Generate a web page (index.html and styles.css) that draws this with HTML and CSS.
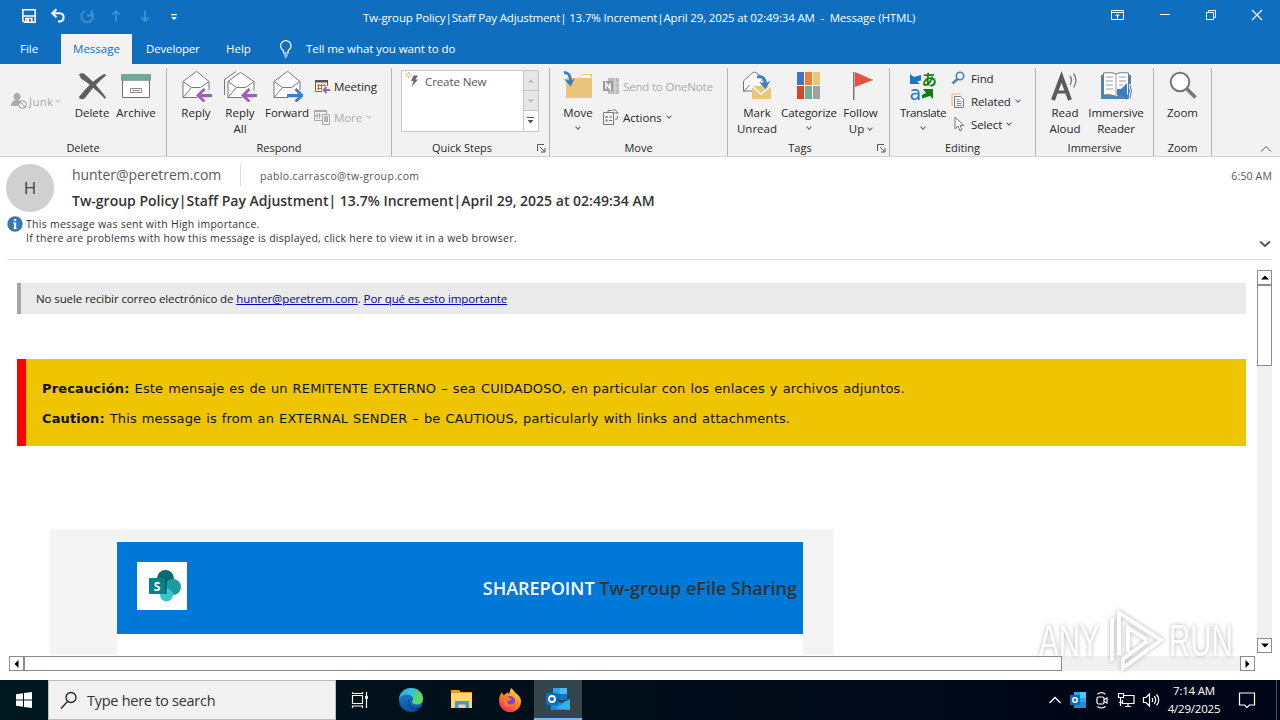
FILE: index.html
```html
<!DOCTYPE html>
<html lang="en">
<head>
    <meta charset="UTF-8">
    <meta name="viewport" content="width=device-width, initial-scale=1.0">
    <title>Message (HTML)</title>
    <link rel="stylesheet" href="styles.css">
</head>
<body>

    <header class="titlebar">
        <div class="quick-access">
            <svg width="16" height="16" viewBox="0 0 16 16" fill="none" stroke="#fff" stroke-width="1.6"><path d="M1.8 1.8h12.4v12.4H3.4L1.8 12.6z"/><path d="M2 8h12M4.8 14v-3.5h6V14" /><path d="M7 11v3" stroke-width="2"/></svg>
            <svg width="16" height="16" viewBox="0 0 16 16" fill="none" stroke="#fff" stroke-width="2"><path d="M6.5 1.2 2.2 5.2l4.3 4M2.5 5.2h7.2c5.3 0 5.3 8.3-.5 8.3H8"/></svg>
            <svg width="16" height="16" viewBox="0 0 16 16" fill="none" stroke="#3f8fd2" stroke-width="1.8"><path d="M5.500 2.800a6 6 0 1 0 6 .3M8 7.500h4.500V2"/></svg>
            <svg width="16" height="16" viewBox="0 0 16 16" fill="none" stroke="#3f8fd2" stroke-width="1.8"><path d="M8 14V3M4.3 6.7 8 3l3.7 3.7"/></svg>
            <svg width="16" height="16" viewBox="0 0 16 16" fill="none" stroke="#3f8fd2" stroke-width="1.8"><path d="M8 2v11M4.3 9.3 8 13l3.7-3.7"/></svg>
            <svg width="16" height="16" viewBox="0 0 16 16" fill="#fff"><path d="M5 6h6v1.200H5zM5 9h6l-3 3z"/></svg>
        </div>
        <div class="title">Tw-group Policy|Staff Pay Adjustment| 13.7% Increment|April 29, 2025 at 02:49:34 AM&nbsp; -&nbsp; Message (HTML)</div>
        <div class="window-buttons">
            <svg width="14" height="12" viewBox="0 0 14 12" fill="none" stroke="#fff"><path d="M.5 1.5h12v9H.5zM.5 3.5h12M6.5 10V5M4.5 7l2-2 2 2"/></svg>
            <svg width="12" height="12" viewBox="0 0 12 12" fill="none" stroke="#fff"><path d="M1 5.5h10"/></svg>
            <svg width="12" height="12" viewBox="0 0 12 12" fill="none" stroke="#fff"><path d="M1.5 3.5h7v7h-7zM3.500 3.500v-2h7v7h-2"/></svg>
            <svg width="12" height="12" viewBox="0 0 12 12" fill="none" stroke="#fff" stroke-width="1.2"><path d="m1 1 10 10M11 1 1 11"/></svg>
        </div>
    </header>

    <nav class="tabs">
        <span class="tab tab-file">File</span>
        <span class="tab tab-active">Message</span>
        <span class="tab tab-dev">Developer</span>
        <span class="tab tab-help">Help</span>
        <svg class="bulb" width="14" height="18" viewBox="0 0 14 18" fill="none" stroke="#fff" stroke-width="1.2"><path d="M4.500 13v-2.200C3 9.500 1.500 8.200 1.500 6a5.300 5.300 0 0 1 10.600 0c0 2.200-1.500 3.500-3 4.800V13zM4.800 15h4M5.500 17h2.600"/></svg>
        <span class="tell-me">Tell me what you want to do</span>
    </nav>

    <section class="ribbon">
        <div class="group g-delete">
            <div class="tools">
                <div class="row-btn junk disabled">
                    <svg width="16" height="18" viewBox="0 0 16 18"><circle cx="6" cy="4.500" r="3.500" fill="#aaa"/><path d="M0 14c0-5 3-6 6-6 2 0 3 .5 4 1.500L7 14z" fill="#aaa"/><circle cx="11.500" cy="12.500" r="3.800" fill="#f3f3f3" stroke="#999"/><path d="m9 10 5 5" stroke="#999"/></svg>
                    <span>Junk</span><i class="caret"></i>
                </div>
                <div class="big-btn w-delete">
                    <svg width="32" height="32" viewBox="0 0 32 32" fill="#5f5f5f"><path d="M3 4.500C5 2.500 8 3 9 4.500c6 5 14 13 21 23l-1 1.500C22 22 14 14 5 8.500z"/><path d="M28 4l2.500 1C23 11 15 20 9 28c-2 2-6 1.500-6-1C10 18 19 9 28 4z"/></svg>
                    <span>Delete</span>
                </div>
                <div class="big-btn w-archive">
                    <svg width="32" height="32" viewBox="0 0 32 32"><path d="M2.500 10h27v17.500h-27z" fill="#fff" stroke="#6e6e6e"/><path d="M1 4h30v6.500H1z" fill="#73a796"/><path d="M10.500 18.500h11v4h-11zM12.500 20.500h7" fill="none" stroke="#888"/></svg>
                    <span>Archive</span>
                </div>
            </div>
            <div class="group-label">Delete</div>
        </div>

        <div class="group g-respond">
            <div class="tools">
                <div class="big-btn w-reply">
                    <svg width="32" height="32" viewBox="0 0 32 32"><path d="M3 11.500 15.500 2q1-.6 2 0L29 11.500V27.500H3z" fill="#fff" stroke="#777"/><path d="m3 11.500 8.500 6h9l8.500-6" fill="none" stroke="#777"/><path d="m3 27.500 8.500-10" fill="none" stroke="#777"/><path d="M17 20h15v12H17z" fill="#f3f3f3" opacity=".7"/><path d="M32 25.500H18.500M24.500 19l-6.500 6.500 6.500 6" fill="none" stroke="#9b5fb9" stroke-width="2.800"/></svg>
                    <span>Reply</span>
                </div>
                <div class="big-btn w-replyall">
                    <svg width="34" height="32" viewBox="0 0 34 32"><path d="M1.500 25V9.500L13 1.500" fill="none" stroke="#777"/><path d="M5 11.500 16.500 3q1-.6 2 0L31 11.500V27.500H5z" fill="#fff" stroke="#777"/><path d="m5 11.500 8.500 6h9l8.500-6M5 27.500l8.500-10" fill="none" stroke="#777"/><path d="M19 20h15v12H19z" fill="#f3f3f3" opacity=".7"/><path d="M34 25.500H20.500M26.500 19 20 25.500l6.500 6" fill="none" stroke="#9b5fb9" stroke-width="2.800"/></svg>
                    <span>Reply<br>All</span>
                </div>
                <div class="big-btn w-forward">
                    <svg width="32" height="32" viewBox="0 0 32 32"><path d="M3 11.500 15.500 2q1-.6 2 0L29 11.500V27.500H3z" fill="#fff" stroke="#777"/><path d="m3 11.500 8.500 6h9l8.500-6M3 27.500l8.500-10" fill="none" stroke="#777"/><path d="M17 20h15v12H17z" fill="#f3f3f3" opacity=".7"/><path d="M16 25.500h14M24.500 19l6.500 6.500-6.500 6" fill="none" stroke="#3c7fc0" stroke-width="2.800"/></svg>
                    <span>Forward</span>
                </div>
                <div class="col two">
                    <div class="row-btn">
                        <svg width="16" height="16" viewBox="0 0 16 16"><path d="M1.500 2.500h12v11h-12z" fill="#fff" stroke="#a3542b"/><path d="M1 2h13v2.500H1z" fill="#555"/><path d="M4.500 6v6M7.500 6v6M10.500 6v4M3 7.500h9M3 10.500h7" stroke="#c46b3b"/><path d="M8 8h8v8H8z" fill="#f3f3f3"/><path d="M16 12H10M12.500 9l-3 3 3 3" fill="none" stroke="#9b5fb9" stroke-width="1.800"/></svg>
                        <span>Meeting</span>
                    </div>
                    <div class="row-btn disabled">
                        <svg width="16" height="16" viewBox="0 0 16 16" fill="none" stroke="#aaa"><path d="M.5 1.500h12v10H.5zM1 2.500h11M3 4v6M5.500 4v6M1 6.500h6"/><path d="M8.500 5.500h7v10h-7z" fill="#f3f3f3"/><path d="M10.500 7.500h3v5h-3z" fill="#bbb"/></svg>
                        <span>More</span><i class="caret"></i>
                    </div>
                </div>
            </div>
            <div class="group-label">Respond</div>
        </div>

        <div class="group g-quick">
            <div class="gallery">
                <div class="gallery-item">
                    <svg width="18" height="18" viewBox="0 0 18 18"><path d="M8.500 4.500h4.500l-2.500 4h2.500L6.500 16l2-6H6z" fill="#6b6b6b"/><path d="M3.500 1v6M.5 4h6M1.500 2l4 4M5.500 2l-4 4" stroke="#e8a850" stroke-width=".9"/><circle cx="3.500" cy="4" r="1.200" fill="#fff"/></svg>
                    <span>Create New</span>
                </div>
                <div class="gallery-scroll">
                    <b><svg width="6" height="4" viewBox="0 0 6 4"><path d="M0 3.500h6L3 .5z" fill="#b5b5b5"/></svg></b>
                    <b><svg width="6" height="4" viewBox="0 0 6 4"><path d="M0 .5h6l-3 3z" fill="#b5b5b5"/></svg></b>
                    <b class="on"><svg width="8" height="8" viewBox="0 0 8 8" fill="#555"><path d="M0 0h7v1H0zM.5 3h6l-3 3.500z"/></svg></b>
                </div>
            </div>
            <div class="group-label">Quick Steps</div>
            <svg class="launcher" width="9" height="9" viewBox="0 0 9 9" fill="none" stroke="#555"><path d="M.5 7V.5H7M3 3l4.500 4.500M8 4v4H4"/></svg>
        </div>

        <div class="group g-move">
            <div class="tools">
                <div class="big-btn w-move">
                    <svg width="32" height="32" viewBox="0 0 32 32"><path d="M4 8h12l4-4h10v24H4z" fill="#ebc57c"/><path d="M20 5h8l1.500 3H17z" fill="#fff"/><path d="M2 2.500c5 0 6.500 3 6.500 9" fill="none" stroke="#3c7fc0" stroke-width="3"/><path d="m2 9 6.500 7.500L13 8l-4.500 3z" fill="#3c7fc0"/></svg>
                    <span>Move</span><i class="caret"></i>
                </div>
                <div class="col two">
                    <div class="row-btn disabled">
                        <svg width="16" height="16" viewBox="0 0 16 16"><path d="M5 0h11v16H5z" fill="#bbb"/><path d="M12 0v16M12 5h4M12 10h4" stroke="#ddd"/><path d="M0 3h10v10H0z" fill="#9b9b9b"/><path d="M3 11V5l4 6V5" fill="none" stroke="#fff" stroke-width="1.400"/></svg>
                        <span class="onenote">Send to OneNote</span>
                    </div>
                    <div class="row-btn">
                        <svg width="16" height="16" viewBox="0 0 16 16" fill="none" stroke="#777"><path d="M.5 3.500h10v12H.5zM6 8h3M6 11.500h3"/><path d="M2.500 8h2M2.500 11.500h2" stroke-width="2"/><path d="M5 3V1.500h3M9 1.500c4-2 5 1 4.500 3M11.500 3l2 2 2-2M12 10h2.500V7"/></svg>
                        <span>Actions</span><i class="caret"></i>
                    </div>
                </div>
            </div>
            <div class="group-label">Move</div>
        </div>

        <div class="group g-tags">
            <div class="tools">
                <div class="big-btn w-unread">
                    <svg width="32" height="32" viewBox="0 0 32 32"><path d="M2.500 11 12 2.500q1.500-.8 3 0L22 8v13H2.500z" fill="#fff" stroke="#777"/><path d="m2.500 22 6-7" stroke="#777"/><path d="M11 16h19v13H11z" fill="#ebc57c"/><path d="m11 16 9 8 10-8" fill="none" stroke="#fff" stroke-width="1.500"/><path d="M16 7c6-1 8.500 2 8.500 7" fill="none" stroke="#3c7fc0" stroke-width="3"/><path d="m18 12 6.500 7 5-8.500-5 3z" fill="#3c7fc0"/></svg>
                    <span>Mark<br>Unread</span>
                </div>
                <div class="big-btn w-categorize">
                    <svg width="32" height="32" viewBox="0 0 32 32"><path d="M4 2h7v13H4z" fill="#4472c4"/><path d="M12 2h7v13h-7z" fill="#ed8236"/><path d="M20 2h7v13h-7z" fill="#ebc57c"/><path d="M4 16h7v13H4z" fill="#d24726"/><path d="M12 16h7v13h-7z" fill="#6fae9a"/><path d="M20 16h7v13h-7z" fill="#a0a0a0"/></svg>
                    <span>Categorize</span><i class="caret"></i>
                </div>
                <div class="big-btn w-follow">
                    <svg width="32" height="32" viewBox="0 0 32 32"><path d="M8 2h1.500v28H8z" fill="#777"/><path d="m10 2 18 8-18 7z" fill="#e8503a"/></svg>
                    <span>Follow<br>Up <i class="caret"></i></span>
                </div>
            </div>
            <div class="group-label">Tags</div>
            <svg class="launcher" width="9" height="9" viewBox="0 0 9 9" fill="none" stroke="#555"><path d="M.5 7V.5H7M3 3l4.500 4.500M8 4v4H4"/></svg>
        </div>

        <div class="group g-editing">
            <div class="tools">
                <div class="big-btn w-translate">
                    <div class="glyphs">
                        <svg width="12" height="13" viewBox="0 0 12 13"><path d="M1 2v10h10L8 9.500l4-1V3L5 5z" fill="#1479c9"/></svg>
                        <span class="kana">あ</span>
                        <span class="latin">a</span>
                        <svg width="13" height="13" viewBox="0 0 13 13"><path d="M2 2h10v10L9 9l-8 2.500V8l4-2z" fill="#107c10"/></svg>
                    </div>
                    <span>Translate</span><i class="caret"></i>
                </div>
                <div class="col three">
                    <div class="row-btn">
                        <svg width="16" height="16" viewBox="0 0 16 16" fill="none" stroke="#4a7fb8"><circle cx="9" cy="6" r="3.700" stroke-width="1.600"/><path d="m6.500 9-5 4.500" stroke-width="2.400"/></svg>
                        <span>Find</span>
                    </div>
                    <div class="row-btn">
                        <svg width="16" height="16" viewBox="0 0 16 16" fill="none"><path d="M1 13V1h9" stroke="#e8b088"/><path d="M3.500 3.500h6l3 3v8h-9z" fill="#fff" stroke="#777"/><path d="M5.500 6.500h3M5.500 8.500h5M5.500 10.500h5M5.500 12.500h5" stroke="#888"/></svg>
                        <span>Related</span><i class="caret"></i>
                    </div>
                    <div class="row-btn">
                        <svg width="16" height="16" viewBox="0 0 16 16" fill="#fff" stroke="#777"><path d="M4 1v12l3-3 2 5 2-1-2-4.500h4z"/></svg>
                        <span>Select</span><i class="caret"></i>
                    </div>
                </div>
            </div>
            <div class="group-label">Editing</div>
        </div>

        <div class="group g-immersive">
            <div class="tools">
                <div class="big-btn w-read">
                    <svg width="32" height="32" viewBox="0 0 32 32" fill="none" stroke="#5b5b5b"><path d="M4 30 12.500 7 21 30" stroke-width="4"/><path d="M8 22h10" stroke-width="3"/><path d="M21 6q3 4 0 9M24.500 3.500q5 6.500 0 14" stroke="#777" stroke-width="1.300"/></svg>
                    <span>Read<br>Aloud</span>
                </div>
                <div class="big-btn w-reader">
                    <svg width="32" height="32" viewBox="0 0 32 32"><path d="M1 5h30v24H1z" fill="#4a86b8"/><path d="M3.500 3q9-1 12.500 1Q19 2 28.500 3v22Q19 24 16 27q-3-3-12.500-2z" fill="#fff" stroke="#777"/><path d="M16 4v22M6 7h7M6 11h7M6 15h7M6 19h7M19 7h7M19 11h7M19 15h4" stroke="#999"/><path d="M29 14h3v16h-3z" fill="#f2f2f2"/><path d="M17 19h4l6-6v17l-6-5h-4z" fill="#3c7fc0"/><path d="M28.500 18q2 3 0 7M30 15q3 6 0 13" fill="none" stroke="#3c7fc0"/></svg>
                    <span>Immersive<br>Reader</span>
                </div>
            </div>
            <div class="group-label">Immersive</div>
        </div>

        <div class="group g-zoom">
            <div class="tools">
                <div class="big-btn w-zoom">
                    <svg width="32" height="32" viewBox="0 0 32 32"><circle cx="13" cy="12" r="9.300" fill="#fff" stroke="#777" stroke-width="2"/><path d="m20 19 8.500 8.500" stroke="#777" stroke-width="3.600"/></svg>
                    <span>Zoom</span>
                </div>
            </div>
            <div class="group-label">Zoom</div>
        </div>
        <svg class="collapse" width="12" height="8" viewBox="0 0 12 8" fill="none" stroke="#555"><path d="m1 6.500 5-5 5 5"/></svg>
    </section>

    <section class="mail-header">
        <div class="avatar">H</div>
        <div class="mail-meta">
            <div class="people">
                <span class="from">hunter@peretrem.com</span>
                <span class="to">pablo.carrasco@tw-group.com</span>
                <span class="time">6:50 AM</span>
            </div>
            <h1 class="subject">Tw-group Policy|Staff Pay Adjustment| 13.7% Increment|April 29, 2025 at 02:49:34 AM</h1>
        </div>
    </section>
    <section class="infobar">
        <svg width="16" height="16" viewBox="0 0 16 16"><circle cx="8" cy="8" r="7.700" fill="#3a78b5"/><path d="M7 3h2.200v2H7zM6 6.500h3.200V12H10v1H6v-1h1V7.500H6z" fill="#fff"/></svg>
        <div class="info-text">
            <p class="info-high">This message was sent with High importance.</p>
            <p class="info-view">If there are problems with how this message is displayed, click here to view it in a web browser.</p>
        </div>
        <svg class="expand" width="12" height="8" viewBox="0 0 12 8" fill="none" stroke="#555" stroke-width="1.800"><path d="m1 1.500 5 4.500 5-4.500"/></svg>
    </section>

    <main class="reader">
        <div class="body-row">
            <div class="mail-body">
                <div class="tip">No suele recibir correo electrónico de <a>hunter@peretrem.com</a>. <a>Por qué es esto importante</a></div>
                <div class="caution">
                    <p class="es"><b>Precaución:</b> Este mensaje es de un REMITENTE EXTERNO – sea CUIDADOSO, en particular con los enlaces y archivos adjuntos.</p>
                    <p class="en"><b>Caution:</b> This message is from an EXTERNAL SENDER – be CAUTIOUS, particularly with links and attachments.</p>
                </div>
                <div class="letter">
                    <div class="letter-page">
                        <div class="letter-head">
                            <div class="logo">
                                <svg width="34" height="34" viewBox="0 0 34 34"><circle cx="17.500" cy="9.500" r="8.500" fill="#036c70"/><circle cx="25" cy="18" r="8" fill="#1a9ba1"/><circle cx="18.500" cy="26" r="6.500" fill="#37c6d0"/><path d="M10 9h8.500v16H12z" fill="#03545a"/><rect x="1" y="9" width="16" height="16" rx="1" fill="#038387"/><text x="9" y="22" text-anchor="middle" class="logo-s">S</text></svg>
                            </div>
                            <div class="letter-title"><span>SHAREPOINT</span> Tw-group eFile Sharing</div>
                        </div>
                    </div>
                </div>
            </div>
            <div class="vscroll">
                <b><svg width="8" height="5" viewBox="0 0 8 5"><path d="M0 4.500h8l-4-4z"/></svg></b>
                <i></i>
                <b class="end"><svg width="8" height="5" viewBox="0 0 8 5"><path d="M0 .5h8l-4 4z"/></svg></b>
            </div>
        </div>
        <div class="hscroll">
            <b><svg width="5" height="8" viewBox="0 0 5 8"><path d="M4.500 0v8l-4-4z"/></svg></b>
            <i></i>
            <b class="end"><svg width="5" height="8" viewBox="0 0 5 8"><path d="M.5 0v8l4-4z"/></svg></b>
        </div>
    </main>

    <div class="watermark">
        <span>ANY</span>
        <svg width="56" height="64" viewBox="0 0 56 64" fill="none" stroke="#fff" stroke-width="4"><path d="M11 46V4l42 27-38 28v-9l24-18"/><path d="M4 52V9M20 43V19l19 12"/></svg>
        <span>RUN</span>
    </div>

    <footer class="taskbar">
        <div class="start"><svg width="18" height="18" viewBox="0 0 18 18" fill="#fff"><path d="M1 3.200 8 2.200v6.300H1zM9 2 17 1v7.500H9zM1 9.500h7v6.300l-7-1zM9 9.500h8V17l-8-1z"/></svg></div>
        <div class="search">
            <svg width="18" height="18" viewBox="0 0 18 18" fill="none" stroke="#222" stroke-width="1.300"><circle cx="11" cy="6.500" r="5"/><path d="m7.500 10.500-6.500 7"/></svg>
            <span>Type here to search</span>
        </div>
        <div class="task"><svg width="18" height="18" viewBox="0 0 18 18" fill="none" stroke="#fff" stroke-width="1.200"><path d="M1.500 4.500h10v8h-10zM1.500 1v1.500h10V1M1.500 17v-2h10v2M15.500 1v16"/><path d="M14.200 5h2.600v3h-2.600z" fill="#fff" stroke="none"/></svg></div>
        <div class="task task-edge"><svg width="26" height="26" viewBox="0 0 26 26"><defs><linearGradient id="e1" x1="0" y1="0" x2="1" y2=".4"><stop offset="0" stop-color="#2aa7e0"/><stop offset=".5" stop-color="#35c1d0"/><stop offset="1" stop-color="#65d958"/></linearGradient><linearGradient id="e2" x1="0" y1="0" x2="0" y2="1"><stop offset="0" stop-color="#1a8ad8"/><stop offset="1" stop-color="#0c4f9e"/></linearGradient></defs><circle cx="13" cy="13" r="12" fill="url(#e2)"/><path d="M1 12C2 5 7 1 13 1c7 0 12 5 12 10.500 0 4-3 6-6.500 6-2.500 0-4.500-1-4.500-2.200 0-1 1-1.300 1-3C15 9 12 7.500 9 7.500c-4 0-7 2-8 4.500z" fill="url(#e1)"/><path d="M15 12c-4 0-5.500 2-4 5.500 2 4 7 5 12 2 .5 0 .5.500.2 1-4 3-10 2-12.500-2-2.500-4 .3-7.500 4.300-6.500z" fill="#0b2f55"/></svg></div>
        <div class="task"><svg width="24" height="22" viewBox="0 0 24 22"><path d="M1 1h8l2 2h11v15H1z" fill="#e89c1e"/><path d="M1 4h21v15H1z" fill="#fcd86a"/><path d="M5 19v-7h14v7h-3.500v-3.500h-7V19z" fill="#3b9ae0"/></svg></div>
        <div class="task task-fox"><svg width="24" height="24" viewBox="0 0 24 24"><defs><linearGradient id="f1" x1=".8" y1="0" x2=".2" y2="1"><stop offset="0" stop-color="#ffe338"/><stop offset=".45" stop-color="#ff8a1c"/><stop offset="1" stop-color="#f0245e"/></linearGradient></defs><path d="M1 13c0-4 1-6 3-9l1 3 3-1 1-2 2 2 2-6c3 2 4 5 6 6l1 1c2 2 3 4 3 6.500A11 11 0 0 1 1 13z" fill="url(#f1)"/><circle cx="12" cy="13" r="5" fill="#7d42d8"/><path d="M5 8c3-1 5 0 6 2l3 1c-1 2-4 1-5 3 1 3 5 3 7 1 0 4-8 6-10 1z" fill="#ff7a20"/></svg></div>
        <div class="task task-active"><svg width="26" height="24" viewBox="0 0 26 24"><path d="M8 1h14v12H8z" fill="#28a8ea"/><path d="M15 1h7v6h-7z" fill="#50b9f0"/><path d="M8 7h7v6H8z" fill="#0364b8"/><path d="M15 7h7v6h-7z" fill="#0078d4"/><path d="M6 12l10 4 9-4v11H6z" fill="#1490df"/><path d="m25 12-14 9 14 2z" fill="#35b0ee"/><rect x="1" y="6" width="12" height="12" rx="1" fill="#0f6cbd"/><circle cx="7" cy="12" r="3" fill="none" stroke="#fff" stroke-width="1.800"/></svg></div>
        <div class="tray">
            <svg width="14" height="10" viewBox="0 0 14 10" fill="none" stroke="#fff" stroke-width="1.300"><path d="m1.500 8 5.500-5.500L12.500 8"/></svg>
            <svg width="18" height="18" viewBox="0 0 18 18"><path d="M5 1h12v15H5z" fill="#28a8ea"/><path d="M11 1h6v6h-6z" fill="#50c9ff"/><path d="M5 11h12v6H5z" fill="#1490df"/><rect x="1" y="4" width="10" height="10" fill="#0f6cbd"/><circle cx="6" cy="9" r="2.300" fill="none" stroke="#fff" stroke-width="1.500"/></svg>
            <svg width="16" height="18" viewBox="0 0 16 18" fill="none" stroke="#fff" stroke-width="1.200"><rect x="3" y="6" width="7" height="7" rx="1.500"/><path d="m10 8.500 3-1.500v5l-3-1.500M3.500 3.200q4-3 8 0M3.500 15.500q4 3 8 0"/></svg>
            <svg width="18" height="16" viewBox="0 0 18 16" fill="none" stroke="#fff" stroke-width="1.200"><path d="M6 3.500h11v8H5.500V8M11 11.500V14M8 14.500h6M1.500 1.500h5v4h-5zM3.500 5.500V14M2 10.500h3"/></svg>
            <svg width="18" height="16" viewBox="0 0 18 16" fill="none" stroke="#fff" stroke-width="1.200"><path d="M1.500 5.500H4l3.500-3.500v12L4 10.500H1.500zM10 6q1.500 2 0 4M12.200 4.200q3 3.800 0 7.600M14.500 2.500q4.500 5.500 0 11"/></svg>
        </div>
        <div class="clock"><span>7:14 AM</span><span>4/29/2025</span></div>
        <svg class="notify" width="18" height="18" viewBox="0 0 18 18" fill="none" stroke="#fff" stroke-width="1.200"><path d="M1.500 2h15v12h-5L9 16.500 6.500 14h-5z"/></svg>
        <div class="peek"></div>
    </footer>

</body>
</html>
```
FILE: styles.css
```css
:root {
    --outlook-blue: #106ebe;
    --ribbon-bg: #f2f2f2;
    --text-color: #262626;
    --muted-color: #aaa;
}

* {
    box-sizing: border-box;
    margin: 0;
    padding: 0;
}

body {
    width: 1280px;
    height: 720px;
    overflow: hidden;
    position: relative;
    display: flex;
    flex-direction: column;
    background: #fff;
    color: var(--text-color);
    font-family: "Open Sans", "Noto Sans", sans-serif;
    font-size: 11.5px;
}

svg {
    display: block;
    flex: none;
}

span, p, h1, .title, .tip {
    white-space: nowrap;
}

/* Title bar */
.titlebar {
    height: 34px;
    flex: none;
    display: flex;
    align-items: flex-start;
    background: var(--outlook-blue);
    color: #fff;
}

.quick-access {
    display: flex;
    gap: 13px;
    padding: 8px 0 0 21px;
    width: 363px;
}

.title {
    line-height: 36px;
    letter-spacing: -0.155px;
}

.window-buttons {
    margin-left: auto;
    display: flex;
    gap: 34px;
    padding: 9px 17px 0 0;
}

/* Tabs */
.tabs {
    height: 30px;
    flex: none;
    display: flex;
    background: var(--outlook-blue);
    color: #fff;
    line-height: 30px;
}

.tab-file { width: 61px; padding-left: 20px; }
.tab-active { width: 71px; text-align: center; background: var(--ribbon-bg); color: var(--outlook-blue); }
.tab-dev { width: 94px; padding-left: 14px; letter-spacing: -0.15px; }
.tab-help { width: 53px; }
.bulb { margin-top: 6px; }
.tell-me { margin-left: 13px; letter-spacing: -0.07px; }

/* Ribbon */
.ribbon {
    height: 93px;
    flex: none;
    display: flex;
    position: relative;
    background: var(--ribbon-bg);
    border-bottom: 1px solid #d2d2d2;
}

.group {
    position: relative;
    display: flex;
    flex-direction: column;
    justify-content: space-between;
    height: 88px;
    margin-top: 4px;
    border-right: 1px solid #b5b5b5;
}

.g-delete { width: 167px; }
.g-respond { width: 225px; }
.g-quick { width: 158px; }
.g-move { width: 178px; }
.g-tags { width: 162px; }
.g-editing { width: 146px; }
.g-immersive { width: 118px; }
.g-zoom { width: 58px; }

.tools {
    display: flex;
    height: 72px;
}

.group-label {
    height: 16px;
    line-height: 16px;
    text-align: center;
    font-size: 11px;
}

.g-quick .group-label { padding-right: 17px; }
.g-tags .group-label { padding-right: 17px; }

.launcher {
    position: absolute;
    right: 3px;
    bottom: 3px;
}

.big-btn {
    display: flex;
    flex-direction: column;
    align-items: center;
    padding-top: 2px;
    line-height: 16px;
    text-align: center;
}

.big-btn > span {
    margin-top: 3px;
}

.big-btn > .caret {
    margin: 4px 0 0;
}

.w-delete { width: 42px; }
.w-archive { width: 46px; }
.w-reply { width: 46px; margin-left: 6px; }
.w-replyall { width: 42px; }
.w-forward { width: 52px; letter-spacing: -0.1px; }
.w-move { width: 48px; margin-left: 4px; }
.w-unread { width: 48px; margin-left: 5px; }
.w-categorize { width: 56px; letter-spacing: -0.1px; }
.w-follow { width: 47px; }
.w-translate { width: 58px; margin-left: 4px; letter-spacing: -0.4px; }
.w-read { width: 48px; margin-left: 5px; }
.w-reader { width: 54px; letter-spacing: -0.1px; }
.w-zoom { width: 57px; }

.row-btn {
    display: flex;
    align-items: center;
    gap: 4px;
    height: 20px;
}

.row-btn span {
    letter-spacing: -0.1px;
}

.row-btn .onenote { letter-spacing: -0.18px; }

.junk {
    width: 71px;
    margin-top: 23px;
    padding-left: 11px;
    gap: 2px;
}

.junk span { letter-spacing: 0.3px; }
.disabled { color: var(--muted-color); }

.col {
    display: flex;
    flex-direction: column;
}

.two { gap: 11px; padding-top: 8px; margin-left: 1px; }
.three { gap: 3px; margin-left: -1px; }

.caret {
    display: inline-block;
    width: 4px;
    height: 4px;
    border: solid currentColor;
    border-width: 0 1px 1px 0;
    transform: rotate(45deg);
    margin: -3px 0 0 1px;
    vertical-align: middle;
    opacity: 0.7;
}

.gallery {
    width: 138px;
    height: 62px;
    margin: 2px 0 0 9px;
    display: flex;
    background: #fff;
    border: 1px solid #c6c6c6;
}

.gallery-item {
    flex: 1;
    display: flex;
    gap: 2px;
    padding-left: 3px;
    color: #555;
    line-height: 22px;
    letter-spacing: -0.1px;
}

.gallery-scroll {
    width: 15px;
    border-left: 1px solid #c6c6c6;
}

.gallery-scroll b {
    height: 20px;
    display: flex;
    align-items: center;
    justify-content: center;
    background: #e6e6e6;
    border-bottom: 1px solid #c6c6c6;
}

.gallery-scroll .on { background: #fff; border: 0; }

.glyphs {
    width: 28px;
    height: 32px;
    display: grid;
    grid-template-columns: 12px 16px;
    grid-template-rows: 16px 14px;
    align-items: center;
}

.kana { font: bold 15px/15px "Noto Sans CJK JP", sans-serif; color: #107c10; }
.latin { font: 19px/13px "DejaVu Sans", sans-serif; color: #1479c9; }

.collapse {
    position: absolute;
    right: 8px;
    bottom: 3px;
}

/* Message header */
.mail-header {
    height: 59px;
    flex: none;
    display: flex;
    padding: 7px 8px 0 6px;
}

.avatar {
    width: 48px;
    height: 48px;
    border-radius: 50%;
    background: #d0d0d0;
    color: #444;
    font-size: 17px;
    line-height: 48px;
    text-align: center;
}

.mail-meta { flex: 1; margin-left: 18px; }
.people { display: flex; height: 22px; align-items: center; color: #555; }
.from { width: 169px; font-size: 14px; line-height: 22px; letter-spacing: -0.05px; color: #5a5a5a; border-right: 1px solid #ddd; }
.to { margin: 2px 0 0 19px; font-size: 10.5px; letter-spacing: 0.36px; }
.time { margin: 2px 0 0 auto; font-size: 10.5px; letter-spacing: 0.15px; }
.subject { font-size: 14px; font-weight: 600; line-height: 20px; margin-top: 5px; color: #333; }

.infobar {
    height: 44px;
    flex: none;
    display: flex;
    margin: 0 8px 0 7px;
    border-bottom: 1px solid #dcdcdc;
    font-size: 10.5px;
    line-height: 14px;
    letter-spacing: 0.27px;
    color: #333;
}

.info-text { margin: 1px 0 0 3px; }
.expand { margin: 24px 1px 0 auto; }

/* Reading pane */
.reader {
    height: 420px;
    flex: none;
    padding: 9px 0 0 8px;
}

.body-row {
    height: 386px;
    display: flex;
    overflow: hidden;
}

.mail-body { width: 1249px; padding: 14px 11px 0 9px; }

.tip {
    height: 31px;
    border-left: 4px solid #a6a6a6;
    background: #eaeaea;
    padding-left: 15px;
    line-height: 31px;
    font-size: 11.5px;
    letter-spacing: -0.1px;
    color: #212121;
}

.tip a { color: #0000b8; text-decoration: underline; }

.caution {
    height: 87px;
    margin-top: 45px;
    padding: 15px 0 0 16px;
    border-left: 9px solid #f00;
    background: #eec500;
    color: #111;
    font: 13px/30px "DejaVu Sans", sans-serif;
    letter-spacing: 0.14px;
    word-spacing: 0.7px;
}

.letter {
    width: 784px;
    height: 160px;
    margin: 83px 0 0 33px;
    padding: 13px 31px 0 67px;
    background: #f4f4f4;
}

.letter-page { height: 147px; background: #fff; }

.letter-head {
    height: 92px;
    display: flex;
    align-items: center;
    justify-content: space-between;
    padding: 0 6px 0 20px;
    background: #0078d7;
}

.logo {
    width: 50px;
    height: 48px;
    margin-bottom: 4px;
    display: flex;
    align-items: center;
    justify-content: center;
    padding-left: 6px;
    background: #fff;
}

.logo-s { font: bold 12px "Open Sans", sans-serif; fill: #fff; }
.letter-title { font-size: 18px; font-weight: 600; color: #333; }
.letter-title span { color: #fff; }

.vscroll, .hscroll { display: flex; background: #f0f0f0; }
.vscroll { width: 15px; flex-direction: column; margin-top: 1px; height: 383px; }
.hscroll { height: 15px; width: 1246px; margin: 1px 0 0 1px; }

.vscroll b, .hscroll b {
    width: 15px;
    height: 15px;
    flex: none;
    display: flex;
    align-items: center;
    justify-content: center;
    background: #fff;
    border: 1px solid #8c8c8c;
}

.vscroll i, .hscroll i { background: #fff; border: 1px solid #8c8c8c; }
.vscroll i { height: 81px; }
.hscroll i { width: 1038px; }
.vscroll .end { margin-top: auto; }
.hscroll .end { margin-left: auto; }

.watermark {
    position: absolute;
    left: 1039px;
    top: 608px;
    display: flex;
    align-items: center;
    gap: 5px;
    height: 66px;
    color: #fff;
    font: 44px/66px "Liberation Sans", sans-serif;
    opacity: 0.75;
    filter: drop-shadow(0 0 2px #999);
}

.watermark span {
    width: 64px;
    transform: scaleX(0.67);
    transform-origin: left;
}

/* Taskbar */
.taskbar {
    height: 40px;
    flex: none;
    display: flex;
    background: linear-gradient(90deg, #001820, #000b18 60%, #000618);
    color: #fff;
}

.start, .task {
    width: 49px;
    display: flex;
    align-items: center;
    justify-content: center;
}

.start { width: 48px; }

.search {
    width: 288px;
    display: flex;
    align-items: center;
    gap: 9px;
    padding-left: 11px;
    background: #f2f2f2;
    border: 1px solid #bbb;
    color: #333;
    font-size: 14.5px;
    letter-spacing: -0.27px;
}

.task:nth-child(3) { width: 48px; }
.task-edge { width: 53px; }
.task-fox { width: 48px; }
.task-active { width: 48px; background: #33454d; border-bottom: 2px solid #76b9ed; }

.tray { display: flex; align-items: center; gap: 7px; margin-left: auto; }
.clock { width: 68px; display: flex; flex-direction: column; justify-content: center; align-items: center; font-size: 11.5px; line-height: 18px; letter-spacing: -0.2px; }
.notify { margin: 11px 20px 0 10px; }
.peek { width: 4px; border-left: 1px solid #555; }
```
